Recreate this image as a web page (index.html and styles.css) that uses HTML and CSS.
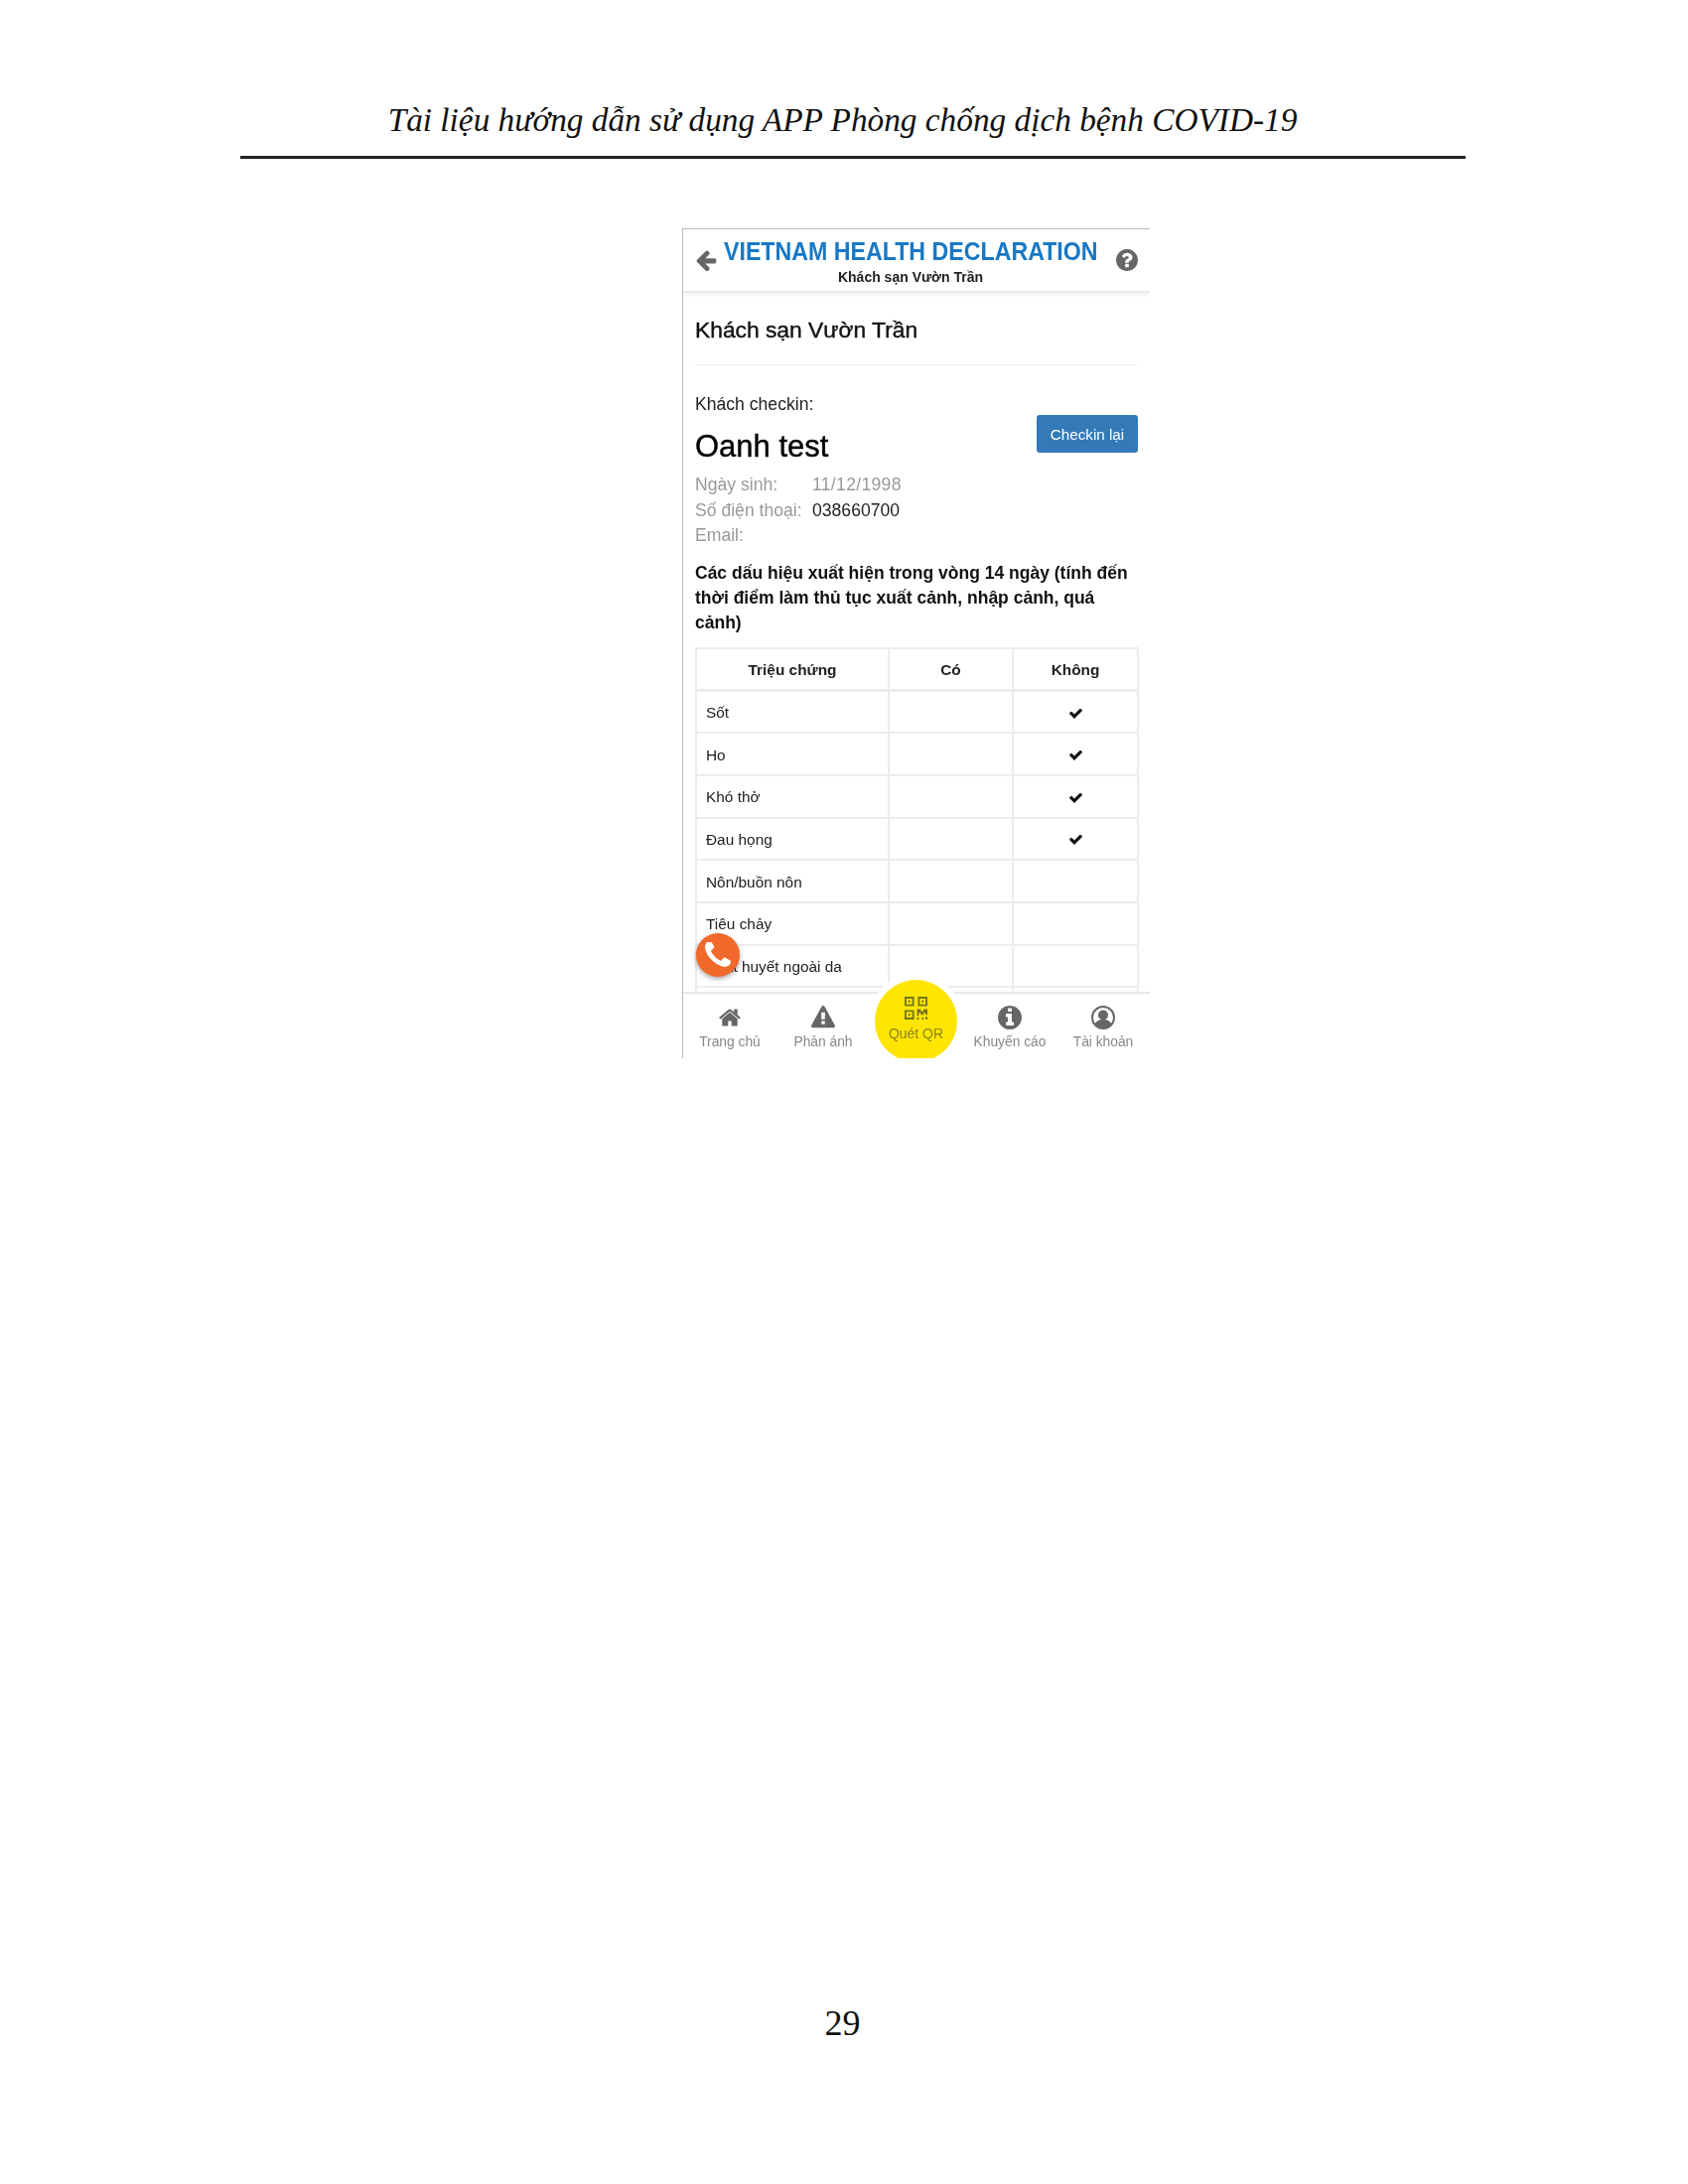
FILE: index.html
```html
<!DOCTYPE html>
<html lang="vi">
<head>
    <meta charset="UTF-8">
    <title>Tài liệu hướng dẫn sử dụng APP Phòng chống dịch bệnh COVID-19</title>
    <link rel="stylesheet" href="styles.css">
</head>
<body>
    <div class="page">
        <header class="doc-header">Tài liệu hướng dẫn sử dụng APP Phòng chống dịch bệnh COVID-19</header>

        <div class="phone">
            <div class="app-header">
                <svg class="icon back-icon" viewBox="0 0 1792 1792"><path d="M1664 896v128q0 53-32.5 90.5t-84.5 37.5h-704l293 294q38 36 38 90t-38 90l-75 76q-37 37-90 37-52 0-91-37l-651-652q-37-37-37-90 0-52 37-91l651-650q38-38 91-38 52 0 90 38l75 74q38 38 38 91t-38 91l-293 293h704q52 0 84.5 37.5t32.5 90.5z"/></svg>
                <div class="app-title">
                    <div class="app-name">VIETNAM HEALTH DECLARATION</div>
                    <div class="app-sub">Khách sạn Vườn Trần</div>
                </div>
                <svg class="icon help-icon" viewBox="128 128 1536 1536"><path d="M1024 1376v-192q0-14-9-23t-23-9h-192q-14 0-23 9t-9 23v192q0 14 9 23t23 9h192q14 0 23-9t9-23zm256-672q0-88-55.5-163t-138.5-116-170-41q-243 0-371 213-15 24 8 42l132 100q7 6 19 6 16 0 25-12 53-68 86-92 34-24 86-24 48 0 85.5 26t37.5 59q0 38-20 61t-68 45q-63 28-115.5 86.5t-52.5 125.5v36q0 14 9 23t23 9h192q14 0 23-9t9-23q0-19 21.5-49.5t54.5-49.5q32-18 49-28.5t46-35 44.5-48 28-60.5 12.5-81zm384 192q0 209-103 385.5t-279.5 279.5-385.5 103-385.5-103-279.5-279.5-103-385.5 103-385.5 279.5-279.5 385.5-103 385.5 103 279.5 279.5 103 385.5z"/></svg>
            </div>

            <div class="content">
                <h4 class="hotel-name">Khách sạn Vườn Trần</h4>

                <div class="guest-row">
                    <div>
                        <div class="guest-label">Khách checkin:</div>
                        <h3 class="guest-name">Oanh test</h3>
                    </div>
                    <button class="btn-checkin">Checkin lại</button>
                </div>

                <dl class="info">
                    <dt>Ngày sinh:</dt><dd class="muted">11/12/1998</dd>
                    <dt>Số điện thoại:</dt><dd>038660700</dd>
                    <dt>Email:</dt><dd></dd>
                </dl>

                <p class="symptom-title">Các dấu hiệu xuất hiện trong vòng 14 ngày (tính đến thời điểm làm thủ tục xuất cảnh, nhập cảnh, quá cảnh)</p>

                <table class="symptoms">
                    <thead>
                        <tr><th>Triệu chứng</th><th>Có</th><th>Không</th></tr>
                    </thead>
                    <tbody>
                        <tr><td>Sốt</td><td></td><td class="mark"><svg class="check" viewBox="0 0 1792 1792"><path d="M1671 566q0 40-28 68l-724 724-136 136q-28 28-68 28t-68-28l-136-136-362-362q-28-28-28-68t28-68l136-136q28-28 68-28t68 28l294 295 656-657q28-28 68-28t68 28l136 136q28 28 28 68z"/></svg></td></tr>
                        <tr><td>Ho</td><td></td><td class="mark"><svg class="check" viewBox="0 0 1792 1792"><path d="M1671 566q0 40-28 68l-724 724-136 136q-28 28-68 28t-68-28l-136-136-362-362q-28-28-28-68t28-68l136-136q28-28 68-28t68 28l294 295 656-657q28-28 68-28t68 28l136 136q28 28 28 68z"/></svg></td></tr>
                        <tr><td>Khó thở</td><td></td><td class="mark"><svg class="check" viewBox="0 0 1792 1792"><path d="M1671 566q0 40-28 68l-724 724-136 136q-28 28-68 28t-68-28l-136-136-362-362q-28-28-28-68t28-68l136-136q28-28 68-28t68 28l294 295 656-657q28-28 68-28t68 28l136 136q28 28 28 68z"/></svg></td></tr>
                        <tr><td>Đau họng</td><td></td><td class="mark"><svg class="check" viewBox="0 0 1792 1792"><path d="M1671 566q0 40-28 68l-724 724-136 136q-28 28-68 28t-68-28l-136-136-362-362q-28-28-28-68t28-68l136-136q28-28 68-28t68 28l294 295 656-657q28-28 68-28t68 28l136 136q28 28 28 68z"/></svg></td></tr>
                        <tr><td>Nôn/buồn nôn</td><td></td><td></td></tr>
                        <tr><td>Tiêu chảy</td><td></td><td></td></tr>
                        <tr><td>Xuất huyết ngoài da</td><td></td><td></td></tr>
                        <tr><td></td><td></td><td></td></tr>
                    </tbody>
                </table>
            </div>

            <div class="call-btn">
                <svg class="call-icon" viewBox="192 192 1408 1408"><path d="M1600 1240q0 27-10 70.5t-21 68.5q-21 50-122 106-94 51-186 51-27 0-53-3.5t-57.5-12.5-47-14.5-55.5-20.5-49-18q-98-35-175-83-127-79-264-216t-216-264q-48-77-83-175-3-9-18-49t-20.5-55.5-14.5-47-12.5-57.5-3.5-53q0-92 51-186 56-101 106-122 25-11 68.5-21t70.5-10q14 0 21 3 18 6 53 76 11 19 30 54t35 63.5 31 53.5q3 4 17.5 25t21.5 35.5 7 28.5q0 20-28.5 50t-62 55-62 53-28.5 46q0 9 5 22.5t8.5 20.5 14 24 11.5 19q76 137 174 235t235 174q2 1 19 11.5t24 14 20.5 8.5 22.5 5q18 0 46-28.5t53-62 55-62 50-28.5q14 0 28.5 7t35.5 21.5 25 17.5q25 15 53.5 31t63.5 35 54 30q70 35 76 53 3 7 3 21z"/></svg>
            </div>

            <nav class="tabbar">
                <div class="tab">
                    <svg class="icon tab-icon" viewBox="0 0 1792 1792"><path d="M1472 992v480q0 26-19 45t-45 19h-384v-384h-256v384h-384q-26 0-45-19t-19-45v-480q0-1 .5-3t.5-3l575-474 575 474q1 2 1 6zm223-69l-62 74q-8 9-21 11h-3q-13 0-21-7l-692-577-692 577q-12 8-24 7-13-2-21-11l-62-74q-8-10-7-23.5t11-21.5l719-599q32-26 76-26t76 26l244 204v-195q0-14 9-23t23-9h192q14 0 23 9t9 23v408l219 182q10 8 11 21.5t-7 23.5z"/></svg>
                    <span>Trang chủ</span>
                </div>
                <div class="tab">
                    <svg class="icon tab-icon" viewBox="0 0 1792 1792"><path d="M1024 1375v-190q0-14-9.5-23.5t-22.5-9.5h-192q-13 0-22.5 9.5t-9.5 23.5v190q0 14 9.5 23.5t22.5 9.5h192q13 0 22.5-9.5t9.5-23.5zm-2-374l18-459q0-12-10-19-13-11-24-11h-220q-11 0-24 11-10 7-10 21l17 457q0 10 10 16.5t24 6.5h185q14 0 23.5-6.5t10.5-16.5zm-14-934l768 1408q35 63-2 126-17 29-46.5 46t-63.5 17h-1536q-34 0-63.5-17t-46.5-46q-37-63-2-126l768-1408q17-31 47-49t65-18 65 18 47 49z"/></svg>
                    <span>Phản ánh</span>
                </div>
                <div class="tab tab-qr">
                    <div class="qr-circle">
                        <svg class="qr-icon" viewBox="0 0 24 24">
                            <path fill-rule="evenodd" d="M0 0h10v10H0zM2 2v6h6V2zM14 0h10v10H14zM16 2v6h6V2zM0 14h10v10H0zM2 16v6h6v-6z"/>
                            <path d="M4 4h2v2H4zM18 4h2v2h-2zM4 18h2v2H4zM13 13h4v2h3v-2h4v6h-2v-2h-2v2h-3v-2h-2v3h-2zM13 22h2v2h-2zM18 22h2v2h-2zM22 21h2v3h-2z"/>
                        </svg>
                        <span>Quét QR</span>
                    </div>
                </div>
                <div class="tab">
                    <svg class="icon tab-icon" viewBox="128 128 1536 1536"><path d="M1152 1376v-160q0-14-9-23t-23-9h-96v-512q0-14-9-23t-23-9h-320q-14 0-23 9t-9 23v160q0 14 9 23t23 9h96v320h-96q-14 0-23 9t-9 23v160q0 14 9 23t23 9h448q14 0 23-9t9-23zm-128-896v-160q0-14-9-23t-23-9h-192q-14 0-23 9t-9 23v160q0 14 9 23t23 9h192q14 0 23-9t9-23zm640 416q0 209-103 385.5t-279.5 279.5-385.5 103-385.5-103-279.5-279.5-103-385.5 103-385.5 279.5-279.5 385.5-103 385.5 103 279.5 279.5 103 385.5z"/></svg>
                    <span>Khuyến cáo</span>
                </div>
                <div class="tab">
                    <svg class="icon tab-icon" viewBox="0 0 24 24">
                        <circle cx="12" cy="12" r="11" fill="none" stroke="#666" stroke-width="2"/>
                        <circle cx="12" cy="9.5" r="5"/>
                        <path d="M3.5 19c1.5-3.5 4-5 8.500-5s7 1.500 8.500 5c-2 2.500-5 4-8.500 4s-6.500-1.500-8.500-4z"/>
                    </svg>
                    <span>Tài khoản</span>
                </div>
            </nav>
        </div>

        <footer class="page-number">29</footer>
    </div>
</body>
</html>
```

FILE: styles.css
```css
body {
    margin: 0;
    background: #fff;
    font-family: "Liberation Sans", Arial, sans-serif;
}
.page {
    width: 1234px;
    height: 2200px;
    margin-left: 242px;
    padding-top: 99px;
    box-sizing: border-box;
}
.doc-header {
    height: 58px;
    padding-right: 21px;
    border-bottom: 3px solid #222;
    font-family: "Liberation Serif", "Times New Roman", serif;
    font-style: italic;
    font-size: 33.300px;
    line-height: 44px;
    text-align: center;
    color: #111;
}

.phone {
    position: relative;
    display: flex;
    flex-direction: column;
    width: 471px;
    height: 836px;
    margin: 70px 0 0 445px;
    border-top: 1px solid #bbb;
    border-left: 1px solid #bbb;
    box-sizing: border-box;
    overflow: hidden;
    color: #222;
    filter: blur(0.45px);
}
.icon {
    fill: #666;
    flex: none;
}

.app-header {
    display: flex;
    align-items: center;
    height: 64px;
    flex: none;
    padding: 0 12px 0 11px;
    border-bottom: 2px solid #e8e8e8;
    box-shadow: 0 2px 4px rgba(0, 0, 0, 0.06);
    box-sizing: border-box;
}
.back-icon {
    width: 24px;
    height: 24px;
    margin-right: 6px;
}
.help-icon {
    width: 22px;
    height: 22px;
    margin-left: auto;
}
.app-title {
    width: 376px;
    margin-top: 2px;
    text-align: center;
    white-space: nowrap;
}
.app-name {
    font-size: 26.500px;
    line-height: 30px;
    font-weight: bold;
    color: #1878c4;
    transform: scaleX(0.875);
    transform-origin: left center;
}
.app-sub {
    font-size: 14px;
    line-height: 18px;
    font-weight: bold;
    color: #222;
    margin-top: 1.500px;
}

.content {
    flex: 1;
    min-height: 0;
    overflow: hidden;
    padding: 0 12px;
}
.hotel-name {
    margin: 0;
    padding: 24px 0 21px;
    border-bottom: 1px solid #eee;
    font-size: 22.800px;
    line-height: 27px;
    font-weight: normal;
    color: #111;
    -webkit-text-stroke: 0.4px #111;
}
.guest-row {
    display: flex;
    justify-content: space-between;
    align-items: flex-end;
    margin-top: 27px;
}
.guest-label {
    font-size: 17.600px;
    line-height: 25px;
}
.guest-name {
    margin: 12px 0 0;
    font-size: 31px;
    line-height: 36px;
    font-weight: normal;
    color: #000;
    -webkit-text-stroke: 0.4px #000;
}
.btn-checkin {
    width: 102px;
    height: 38px;
    margin-bottom: 12px;
    padding: 0;
    border: none;
    border-radius: 3px;
    background: #337ab7;
    color: #fff;
    font-family: inherit;
    font-size: 15.200px;
}
.info {
    display: grid;
    grid-template-columns: 118px 1fr;
    grid-auto-rows: 25.500px;
    margin: 8px 0 0;
    font-size: 17.600px;
    line-height: 25px;
}
.info dt {
    color: #999;
}
.info dd {
    margin: 0;
    color: #222;
}
.info dd.muted {
    color: #999;
    letter-spacing: 0.3px;
}
.symptom-title {
    margin: 12px 0 0;
    font-size: 17.500px;
    line-height: 25px;
    font-weight: bold;
    color: #111;
}

.symptoms {
    width: 447px;
    margin-top: 12.500px;
    border-collapse: collapse;
    table-layout: fixed;
    font-size: 15.400px;
}
.symptoms th,
.symptoms td {
    height: 42.670px;
    padding: 2px 9px 0;
    border: 2px solid #ececec;
    box-sizing: border-box;
}
.symptoms th {
    font-size: 15.400px;
    text-align: center;
    color: #222;
    border-bottom-width: 3px;
}
.symptoms th:nth-child(1),
.symptoms td:nth-child(1) {
    width: 194px;
}
.symptoms th:nth-child(2) {
    width: 125px;
}
.mark {
    text-align: center;
}
.check {
    display: block;
    width: 15px;
    height: 15px;
    margin: 0 auto;
    fill: #111;
}

.call-btn {
    position: absolute;
    left: 13px;
    top: 709px;
    display: flex;
    align-items: center;
    justify-content: center;
    width: 44px;
    height: 44px;
    border-radius: 50%;
    background: #f0692a;
    box-shadow: 0 2px 5px rgba(0, 0, 0, 0.35);
}
.call-icon {
    width: 26px;
    height: 26px;
    fill: #fff;
}

.tabbar {
    position: relative;
    display: flex;
    flex: none;
    height: 67px;
    border-top: 2px solid #e8e8e8;
    background: #fff;
    box-sizing: border-box;
}
.tab {
    flex: 1;
    display: flex;
    flex-direction: column;
    align-items: center;
    padding-top: 12px;
    font-size: 13.800px;
    line-height: 16px;
    color: #888;
}
.tab-icon {
    width: 24px;
    height: 24px;
    margin-bottom: 5px;
}
.tab-qr {
    position: relative;
}
.qr-circle {
    position: absolute;
    left: 5px;
    top: -14px;
    display: flex;
    flex-direction: column;
    align-items: center;
    width: 83px;
    height: 83px;
    padding-top: 17px;
    border-radius: 50%;
    background: #ffe600;
    box-shadow: 0 0 0 6px #fff;
    box-sizing: border-box;
    color: #8a8520;
    font-size: 14px;
}
.qr-icon {
    width: 23px;
    height: 23px;
    margin-bottom: 6px;
    fill: #77741f;
}

.page-number {
    margin-top: 950px;
    padding-right: 21px;
    font-family: "Liberation Serif", "Times New Roman", serif;
    font-size: 36px;
    line-height: 44px;
    text-align: center;
    color: #111;
}
```
